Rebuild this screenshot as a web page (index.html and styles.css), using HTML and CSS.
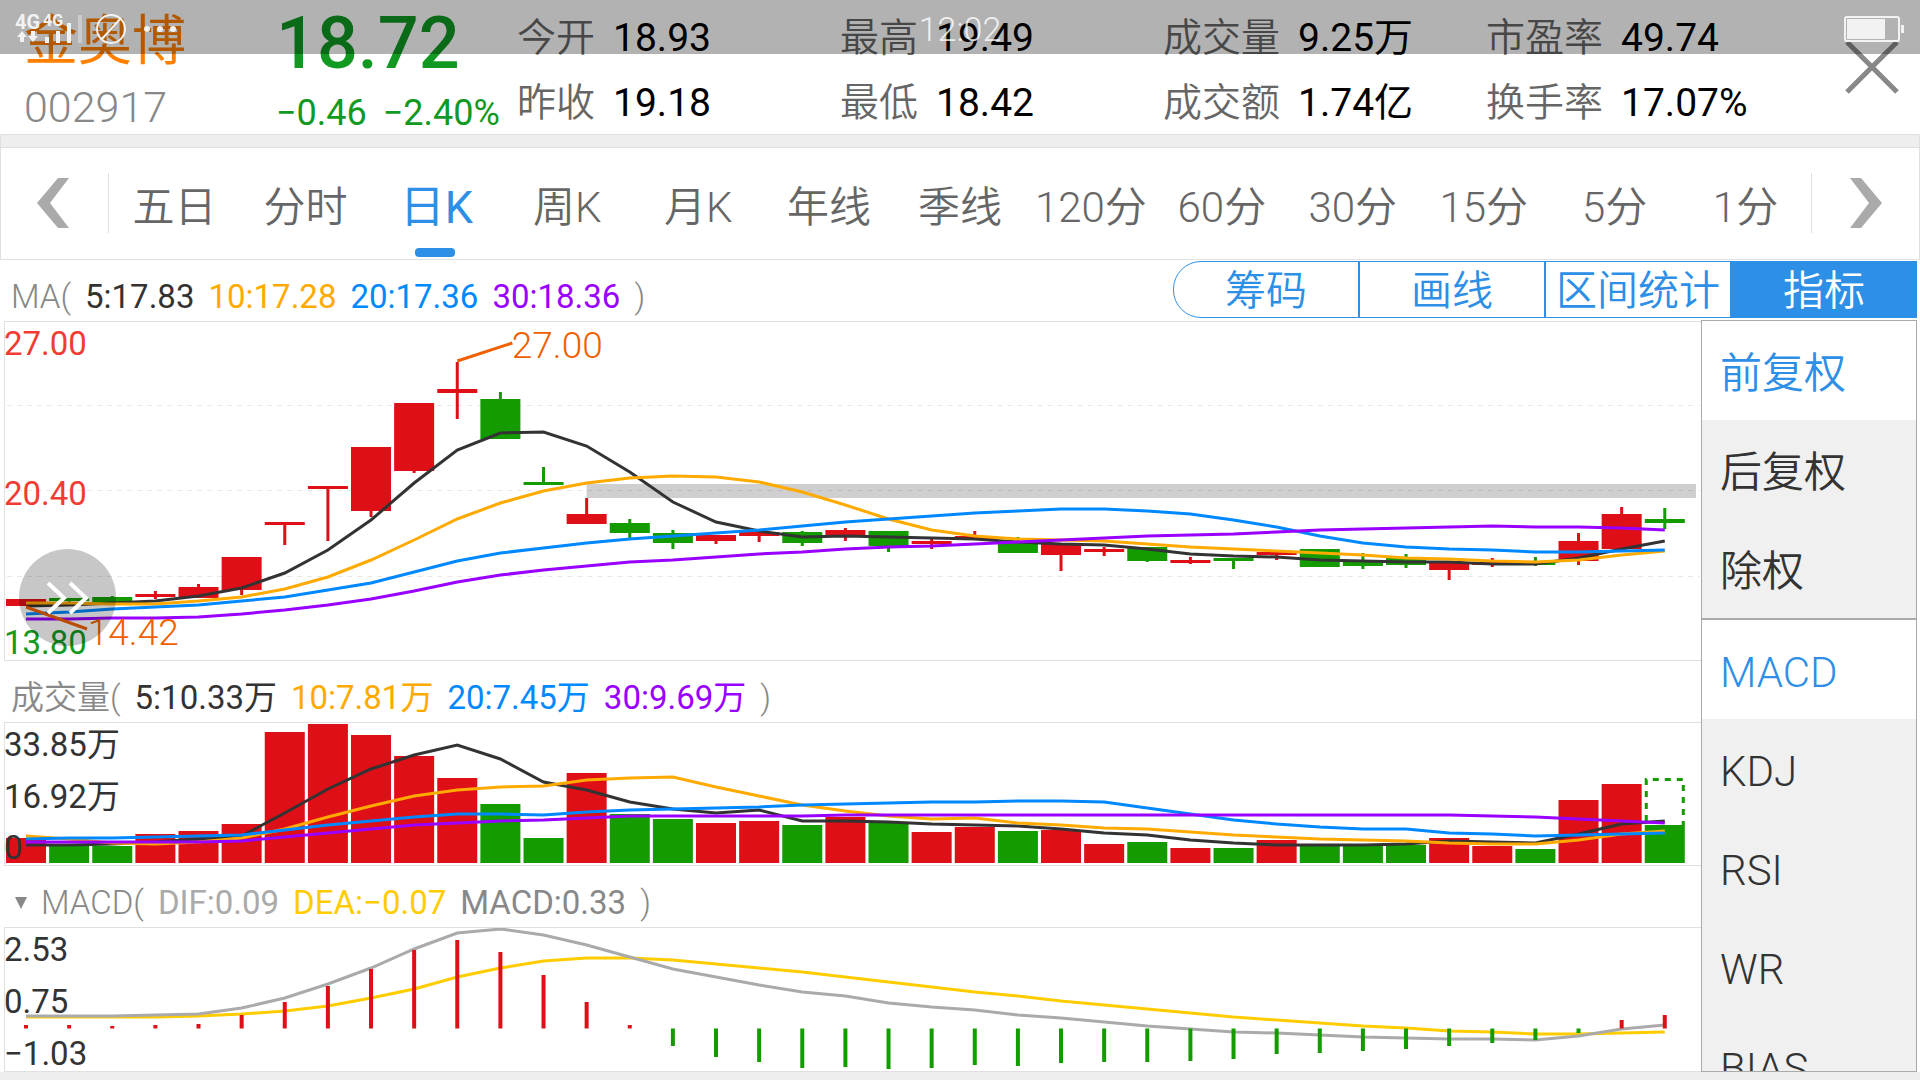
FILE: index.html
```html
<!DOCTYPE html>
<html lang="zh-CN">
<head>
<meta charset="utf-8">
<meta name="viewport" content="width=device-width, initial-scale=1">
<title>金奥博 002917</title>
<link rel="stylesheet" href="styles.css">
</head>
<body>
<div class="status-bar">
  <svg class="status-icons" width="190" height="54" viewBox="0 0 190 54" aria-hidden="true">
    <text class="net-large" x="15" y="27">4G</text>
    <text class="net-small" x="43" y="24">4G</text>
    <path class="status-fill" d="M22 29l5 6h-3v5h-4v-5h-3zM33 40l-5-6h3v-5h4v5h3zM45 35h4v6h-4zM56 29h4v12h-4zM67 21h4v20h-4z"/>
    <path class="status-dim" d="M78 13h4v28h-4z"/>
    <circle class="status-line" cx="111" cy="27" r="14"/>
    <path class="status-line" d="M121 16L102 37"/>
    <circle class="status-fill" cx="147" cy="27" r="3"/>
    <circle class="status-fill" cx="160" cy="27" r="3"/>
    <circle class="status-fill" cx="173" cy="27" r="3"/>
  </svg>
  <span class="clock">12:02</span>
  <svg class="battery" width="60" height="26" viewBox="0 0 60 26" aria-hidden="true">
    <rect class="status-line" x="1" y="1" width="54" height="24" rx="2"/>
    <path class="status-fill" d="M3 3h38v20H3zM57 9h3v8h-3z"/>
  </svg>
</div>

<header class="quote">
  <div class="stock">
    <h1 class="stock-name">金奥博</h1>
    <div class="stock-code">002917</div>
  </div>
  <div class="price">
    <div class="price-last">18.72</div>
    <div class="price-change"><span>−0.46</span><span>−2.40%</span></div>
  </div>
  <dl class="facts">
    <div class="fact"><dt>今开</dt><dd>18.93</dd></div>
    <div class="fact"><dt>最高</dt><dd>19.49</dd></div>
    <div class="fact"><dt>成交量</dt><dd>9.25万</dd></div>
    <div class="fact"><dt>市盈率</dt><dd>49.74</dd></div>
    <div class="fact"><dt>昨收</dt><dd>19.18</dd></div>
    <div class="fact"><dt>最低</dt><dd>18.42</dd></div>
    <div class="fact"><dt>成交额</dt><dd>1.74亿</dd></div>
    <div class="fact"><dt>换手率</dt><dd>17.07%</dd></div>
  </dl>
  <button class="close" type="button" aria-label="关闭">
    <svg width="56" height="56" viewBox="0 0 56 56"><path d="M2 3L52 53M52 3L2 53"/></svg>
  </button>
</header>

<nav class="periods" aria-label="周期">
  <button class="arrow" type="button" aria-label="上一组"><svg width="34" height="52" viewBox="0 0 34 52"><path d="M22 1h11L14 26l19 25H22L1 26z"/></svg></button>
  <div class="period-list">
    <button class="period" type="button">五日</button>
    <button class="period" type="button">分时</button>
    <button class="period is-active" type="button">日K</button>
    <button class="period" type="button">周K</button>
    <button class="period" type="button">月K</button>
    <button class="period" type="button">年线</button>
    <button class="period" type="button">季线</button>
    <button class="period" type="button">120分</button>
    <button class="period" type="button">60分</button>
    <button class="period" type="button">30分</button>
    <button class="period" type="button">15分</button>
    <button class="period" type="button">5分</button>
    <button class="period" type="button">1分</button>
  </div>
  <button class="arrow" type="button" aria-label="下一组"><svg width="34" height="52" viewBox="0 0 34 52"><path d="M12 1H1l19 25L1 51h11l21-25z"/></svg></button>
</nav>

<main class="workspace">
  <div class="toolbar">
    <div class="legend">
      <span class="legend-title">MA(</span>
      <span class="c-ma5">5:17.83</span>
      <span class="c-ma10">10:17.28</span>
      <span class="c-ma20">20:17.36</span>
      <span class="c-ma30">30:18.36</span>
      <span class="legend-title">)</span>
    </div>
    <div class="tools">
      <button class="tool" type="button">筹码</button>
      <button class="tool" type="button">画线</button>
      <button class="tool" type="button">区间统计</button>
      <button class="tool is-active" type="button">指标</button>
    </div>
  </div>

  <div class="charts">
    <section class="plot plot-price">
      <svg id="price" viewBox="0 322 1695 338" preserveAspectRatio="none"></svg>
      <div class="axis"><span class="c-up">27.00</span><span class="c-up">20.40</span><span class="c-down">13.80</span></div>
      <span class="callout callout-high">27.00</span>
      <span class="callout callout-low">14.42</span>
      <button class="expand" type="button" aria-label="展开"><svg width="48" height="36" viewBox="0 0 48 36"><path d="M4 3l16 15L4 33M26 3l16 15-16 15"/></svg></button>
    </section>
    <div class="legend">
      <span class="legend-title">成交量(</span>
      <span class="c-ma5">5:10.33万</span>
      <span class="c-ma10">10:7.81万</span>
      <span class="c-ma20">20:7.45万</span>
      <span class="c-ma30">30:9.69万</span>
      <span class="legend-title">)</span>
    </div>
    <section class="plot plot-volume">
      <svg id="volume" viewBox="0 723 1695 142" preserveAspectRatio="none"></svg>
      <div class="axis"><span>33.85万</span><span>16.92万</span><span>0</span></div>
    </section>
    <div class="legend">
      <button class="legend-menu" type="button" aria-label="选择指标"><svg width="12" height="12" viewBox="0 0 12 12"><path d="M0 0h12L6 12z"/></svg></button>
      <span class="legend-title">MACD(</span>
      <span class="c-dif">DIF:0.09</span>
      <span class="c-dea">DEA:−0.07</span>
      <span class="c-macd">MACD:0.33</span>
      <span class="legend-title">)</span>
    </div>
    <section class="plot plot-macd">
      <svg id="macd" viewBox="0 928 1695 143" preserveAspectRatio="none"></svg>
      <div class="axis"><span>2.53</span><span>0.75</span><span>−1.03</span></div>
    </section>
  </div>

  <aside class="options">
    <div class="option-group">
      <button class="option is-active" type="button">前复权</button>
      <button class="option" type="button">后复权</button>
      <button class="option" type="button">除权</button>
    </div>
    <div class="option-group indicators">
      <button class="option is-active" type="button">MACD</button>
      <button class="option" type="button">KDJ</button>
      <button class="option" type="button">RSI</button>
      <button class="option" type="button">WR</button>
      <button class="option" type="button">BIAS</button>
    </div>
  </aside>
</main>
<script src="charts.js"></script>
</body>
</html>
```

FILE: styles.css
```css
:root {
  --blue: #2d8fe6;
  --line: #e0e0e0;
  --grey: #888;
  --up: #df0f17;
  --down: #149b00;
  --ma5: #333;
  --ma10: #ffaa00;
  --ma20: #0088ff;
  --ma30: #9900ff;
  --dif: #aaa;
  --dea: #ffcc00;
  --light: 350;
}

* { box-sizing: border-box; }

body {
  margin: 0;
  min-height: 100vh;
  background: #eee;
  color: #333;
  font-family: Roboto, "Noto Sans CJK SC", sans-serif;
}

button {
  margin: 0;
  padding: 0;
  border: 0;
  background: none;
  color: inherit;
  font: inherit;
  cursor: pointer;
}

svg { display: block; }

/* Status bar lies over the page header */
.status-bar {
  position: absolute;
  inset: 0 0 auto 0;
  z-index: 2;
  display: grid;
  grid-template-columns: 1fr auto 1fr;
  align-items: center;
  height: 54px;
  background: rgba(0, 0, 0, 0.3);
  color: rgba(255, 255, 255, 0.8);
  pointer-events: none;
}

.clock { font-size: 34px; font-weight: 300; line-height: 58px; }
.battery { justify-self: end; margin-right: 16px; }
.status-fill { fill: #f2f2f2; }
.status-dim { fill: #ccc; }
.status-line { fill: none; stroke: #f2f2f2; stroke-width: 2; }
.net-large, .net-small { fill: #f2f2f2; font-weight: 700; }
.net-large { font-size: 20px; }
.net-small { font-size: 16px; }

/* Quote header */
.quote {
  display: flex;
  height: 134px;
  background: #fff;
}

.stock { width: 276px; padding-left: 24px; }

.stock-name {
  margin: 0;
  color: #ff8000;
  font-size: 54px;
  font-weight: 400;
  line-height: 84px;
}

.stock-code {
  color: var(--grey);
  font-size: 43px;
  font-weight: var(--light);
  line-height: 46px;
}

.price { width: 241px; color: #119922; white-space: nowrap; }
.price-last { font-size: 72px; font-weight: 500; line-height: 88px; }
.price-change { display: flex; gap: 16px; font-size: 36px; line-height: 50px; }

.facts {
  flex: 1;
  display: grid;
  grid-template-columns: repeat(4, 1fr);
  grid-auto-rows: 65px;
  margin: 0;
  padding-top: 6px;
}

.fact { display: flex; gap: 18px; font-size: 39px; line-height: 65px; white-space: nowrap; }
.fact dt { color: #666; font-weight: var(--light); }
.fact dd { margin: 0; color: #000; }

.close { width: 111px; padding: 0 0 0 36px; }
.close path { fill: none; stroke: #888; stroke-width: 5; }

/* Period tabs */
.periods {
  display: flex;
  align-items: center;
  height: 126px;
  border: solid var(--line);
  border-width: 1px;
  background: #fff;
  box-shadow: inset 0 12px #eee, inset 0 13px var(--line);
  padding-top: 12px;
}

.arrow {
  display: flex;
  align-items: center;
  justify-content: center;
  width: 108px;
  height: 60px;
}

.arrow path { fill: #aaa; }
.arrow:first-child { padding-right: 3px; border-right: 1px solid var(--line); }
.arrow:last-child { border-left: 1px solid var(--line); }

.period-list { flex: 1; display: flex; height: 100%; }

.period {
  flex: 1 1 0;
  position: relative;
  color: #666;
  font-size: 42px;
  font-weight: var(--light);
  white-space: nowrap;
}

.period.is-active { color: var(--blue); font-size: 45px; font-weight: 400; }

.period.is-active::after {
  content: "";
  position: absolute;
  bottom: 2px;
  left: calc(50% - 21px);
  width: 40px;
  height: 9px;
  border-radius: 4px;
  background: var(--blue);
}

/* Charts and indicator list */
.workspace {
  display: grid;
  grid-template-columns: minmax(0, 1fr) 216px;
  margin-bottom: 8px;
  padding: 0 3px 0 4px;
  background: #fff;
}

.toolbar {
  grid-column: 1 / -1;
  display: flex;
  justify-content: space-between;
  height: 60px;
}

.charts { padding-top: 1px; }

.legend {
  display: flex;
  align-items: center;
  gap: 14px;
  height: 61px;
  padding: 13px 0 0 7px;
  font-size: 33px;
  line-height: 40px;
  white-space: nowrap;
}

.legend-title { color: var(--grey); font-weight: var(--light); }
.legend-menu { width: 16px; padding-left: 4px; }
.legend-menu path { fill: var(--grey); }

.c-ma5 { color: var(--ma5); }
.c-ma10 { color: var(--ma10); }
.c-ma20 { color: var(--ma20); }
.c-ma30 { color: var(--ma30); }
.c-dif { color: var(--dif); }
.c-dea { color: var(--dea); }
.c-macd { color: var(--grey); }
.c-up { color: #f03c32; }
.c-down { color: #119922; }

.tools { display: flex; padding: 1px 0 2px; }

.tool {
  width: 186px;
  padding-top: 4px;
  border: 1px solid var(--blue);
  color: var(--blue);
  font-size: 41px;
  line-height: 51px;
  font-weight: var(--light);
}

.tool:first-child { border-radius: 28px 0 0 28px; }
.tool.is-active { background: var(--blue); color: #fff; }

.plot { position: relative; border: 1px solid var(--line); border-right: 0; }
.plot > svg { width: 100%; height: 100%; }
.plot-price { height: 340px; }
.plot-volume { height: 144px; }
.plot-macd { height: 145px; }

.axis {
  position: absolute;
  inset: 0 auto -4px -1px;
  display: flex;
  flex-direction: column;
  justify-content: space-between;
  padding-top: 1px;
  font-size: 33px;
  line-height: 42px;
}

.callout {
  position: absolute;
  margin-left: -2px;
  color: #f06000;
  font-size: 37px;
  font-weight: var(--light);
  line-height: 42px;
}

.callout-high { top: 3px; left: 30%; }
.callout-low { bottom: 6px; left: 5%; }

.expand {
  position: absolute;
  bottom: 14px;
  left: 14px;
  display: flex;
  align-items: center;
  justify-content: center;
  width: 97px;
  height: 97px;
  border-radius: 50%;
  background: rgba(0, 0, 0, 0.22);
}

.expand path { fill: none; stroke: #fff; stroke-width: 4; }

.options {
  height: 0;
  min-height: 100%;
  overflow: hidden;
  border: 1px solid #aaa;
  background: #f0f0f0;
}

.option-group + .option-group { border-top: 2px solid #aaa; }

.option {
  display: block;
  width: 100%;
  height: 99px;
  padding: 0 0 2px 18px;
  font-size: 42px;
  font-weight: var(--light);
  text-align: left;
}

.indicators .option { padding: 5px 0 0 18px; }
.option.is-active { background: #fff; color: var(--blue); }

/* Chart marks */
.up { fill: var(--up); }
.down { fill: var(--down); }
.grid { stroke: #e8e8e8; stroke-width: 1; stroke-dasharray: 5 5; }
.gap { fill: rgba(0, 0, 0, 0.19); }
.leader { stroke: #f06000; stroke-width: 3; }
.forecast { fill: none; stroke: var(--down); stroke-width: 3; stroke-dasharray: 6 6; }
.series { fill: none; stroke-width: 3; vector-effect: non-scaling-stroke; }
.s-ma5 { stroke: var(--ma5); }
.s-ma10 { stroke: var(--ma10); }
.s-ma20 { stroke: var(--ma20); }
.s-ma30 { stroke: var(--ma30); }
.s-dif { stroke: var(--dif); }
.s-dea { stroke: var(--dea); }
```

FILE: charts.js
```js
const STEP = 43.1;
const FIRST = 21;
const BODY = 40;
const x = i => FIRST + STEP * i;

const rect = (cls, left, top, width, bottom) =>
  `<rect class="${cls}" x="${left}" y="${top}" width="${width}" height="${bottom - top}"/>`;
const line = (cls, x1, y1, x2, y2) =>
  `<line class="${cls}" x1="${x1}" y1="${y1}" x2="${x2}" y2="${y2}"/>`;
const series = (name, ys) =>
  `<polyline class="series s-${name}" points="${ys.map((y, i) => `${x(i)},${y}`).join(" ")}"/>`;

// direction, body top, body bottom, wick top, wick bottom
const candles = [
  ["up", 599, 606, 599, 606], ["down", 598, 601, 598, 603], ["down", 597, 602, 596, 602],
  ["up", 594, 597, 591, 599], ["up", 587, 598, 584, 598], ["up", 557, 590, 557, 595],
  ["up", 522, 525, 522, 545], ["up", 486, 489, 486, 541], ["up", 447, 511, 447, 517],
  ["up", 403, 471, 403, 473], ["up", 389, 393, 362, 419], ["down", 399, 439, 392, 439],
  ["down", 482, 485, 467, 485], ["up", 514, 524, 498, 524], ["down", 523, 533, 519, 538],
  ["down", 533, 543, 530, 549], ["up", 535, 541, 535, 544], ["up", 532, 536, 532, 542],
  ["down", 532, 543, 531, 546], ["up", 530, 537, 528, 541], ["down", 531, 546, 531, 552],
  ["up", 541, 544, 539, 549], ["up", 536, 540, 531, 540], ["down", 542, 553, 537, 553],
  ["up", 544, 555, 544, 571], ["up", 549, 552, 547, 556], ["down", 547, 561, 547, 562],
  ["up", 560, 563, 557, 564], ["down", 558, 561, 558, 569], ["up", 552, 555, 552, 560],
  ["down", 549, 567, 549, 567], ["down", 562, 566, 553, 569], ["down", 558, 565, 554, 568],
  ["up", 563, 570, 563, 580], ["up", 562, 565, 558, 567], ["down", 563, 565, 557, 566],
  ["up", 541, 561, 533, 565], ["up", 514, 549, 507, 549], ["down", 519, 523, 508, 529]
];

const priceLines = {
  ma5: [606, 605, 603, 601, 596, 588, 573, 550, 520, 483, 450, 433, 432, 446, 472, 502, 522, 531, 537, 536, 537, 538, 539, 542, 544, 545, 549, 554, 556, 557, 560, 561, 562, 562, 564, 564, 558, 549, 541],
  ma10: [603, 603, 604, 604, 601, 597, 589, 577, 560, 540, 519, 503, 491, 483, 478, 476, 477, 482, 492, 505, 519, 530, 536, 539, 540, 541, 544, 547, 549, 551, 553, 555, 558, 559, 561, 562, 560, 555, 551],
  ma20: [614, 612, 609, 607, 605, 601, 597, 590, 583, 572, 561, 553, 548, 543, 539, 536, 533, 530, 526, 522, 519, 516, 513, 511, 509, 509, 511, 514, 520, 527, 536, 543, 547, 549, 550, 552, 552, 551, 550],
  ma30: [619, 619, 618, 618, 617, 614, 610, 605, 599, 591, 582, 575, 570, 566, 562, 560, 557, 554, 552, 549, 547, 546, 544, 542, 540, 538, 536, 535, 534, 532, 530, 529, 528, 527, 526, 527, 527, 528, 530]
};

const volumes = [838, 846, 846, 834, 831, 824, 732, 724, 735, 756, 778, 804, 838, 773, 814, 819, 823, 821, 825, 817, 822, 832, 827, 831, 830, 844, 842, 848, 848, 840, 845, 844, 845, 838, 846, 849, 800, 784, 825];

const volumeLines = {
  ma5: [845, 845, 844, 842, 839, 836, 813, 789, 769, 755, 745, 759, 782, 790, 802, 809, 813, 810, 821, 821, 822, 824, 825, 826, 829, 833, 835, 840, 843, 845, 845, 845, 844, 841, 842, 843, 834, 824, 821],
  ma10: [836, 839, 843, 844, 842, 838, 829, 817, 806, 796, 790, 787, 786, 780, 778, 777, 787, 796, 805, 811, 816, 819, 818, 823, 825, 828, 829, 832, 835, 837, 839, 840, 841, 843, 844, 844, 840, 834, 831],
  ma20: [839, 838, 838, 837, 836, 835, 830, 825, 821, 817, 814, 814, 815, 812, 810, 809, 808, 807, 805, 804, 803, 802, 802, 801, 801, 802, 808, 814, 820, 824, 827, 829, 829, 833, 834, 836, 835, 834, 833],
  ma30: [842, 842, 842, 842, 842, 841, 837, 833, 829, 825, 823, 821, 820, 818, 816, 816, 816, 816, 816, 815, 815, 815, 815, 815, 815, 815, 815, 815, 815, 815, 815, 815, 815, 815, 816, 817, 819, 821, 823]
};

const histogram = [1025, 1025, 1026, 1025, 1024, 1015, 1002, 986, 969, 950, 940, 952, 975, 1002, 1025, 1046, 1057, 1062, 1068, 1067, 1069, 1068, 1065, 1066, 1063, 1062, 1062, 1061, 1059, 1054, 1053, 1051, 1049, 1046, 1043, 1040, 1033, 1020, 1015];

const macdLines = {
  dea: [1017, 1017, 1017, 1017, 1016, 1014, 1011, 1006, 998, 989, 977, 968, 961, 958, 958, 960, 964, 968, 972, 977, 982, 987, 992, 996, 1001, 1005, 1009, 1013, 1017, 1020, 1023, 1026, 1028, 1031, 1032, 1034, 1034, 1033, 1032],
  dif: [1016, 1016, 1016, 1015, 1014, 1008, 998, 984, 968, 949, 933, 929, 935, 945, 957, 969, 977, 985, 992, 996, 1003, 1007, 1010, 1015, 1018, 1022, 1026, 1029, 1032, 1033, 1035, 1037, 1038, 1039, 1039, 1040, 1036, 1029, 1025]
};

const drawLines = set => Object.entries(set).map(([name, ys]) => series(name, ys)).join("");

document.getElementById("price").innerHTML =
  [405, 490, 576].map(y => line("grid", 2, y + 0.5, 1694, y + 0.5)).join("") +
  rect("gap", x(13), 484, 1690 - x(13), 498) +
  candles.map(([dir, top, bottom, high, low], i) =>
    rect(dir, x(i) - BODY / 2, top, BODY, bottom) + rect(dir, x(i) - 1.5, high, 3, low)).join("") +
  drawLines(priceLines) +
  line("leader", x(10), 361, 507, 343) +
  line("leader", x(0), 607, 82, 629);

const last = candles.length - 1;
document.getElementById("volume").innerHTML =
  volumes.map((top, i) => rect(candles[i][0], x(i) - BODY / 2, top, BODY, 863)).join("") +
  `<path class="forecast" d="M${x(last) - 18.5} 821V779.5H${x(last) + 18.5}V825"/>` +
  drawLines(volumeLines);

const ZERO = 1028.5;
document.getElementById("macd").innerHTML =
  drawLines(macdLines) +
  histogram.map((y, i) => y < ZERO
    ? rect("up", x(i) - 2, y, 4, ZERO)
    : rect("down", x(i) - 2, ZERO, 4, y)).join("");
```
